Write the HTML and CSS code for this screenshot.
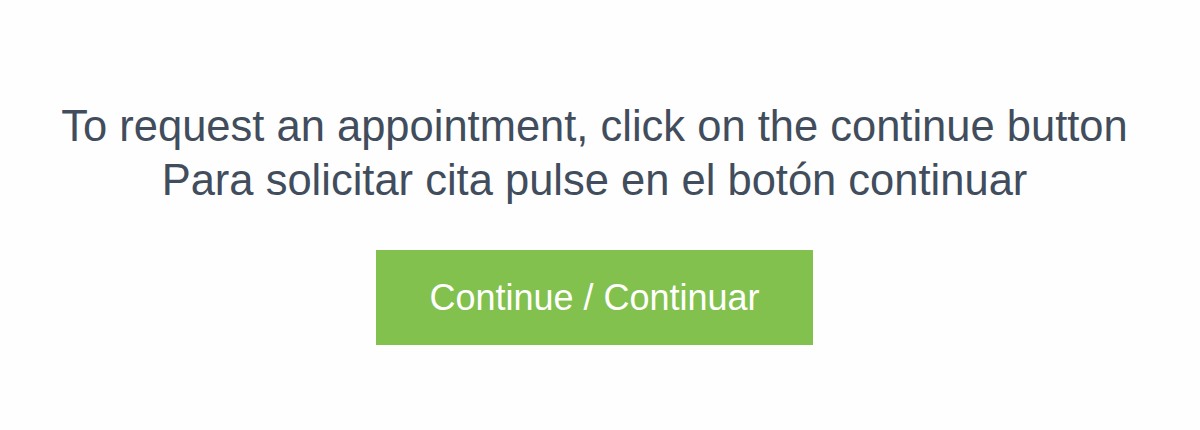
FILE: index.html
```html
<!DOCTYPE html>
<html lang="en">
<head>
<meta charset="utf-8">
<title>Appointment</title>
<link rel="stylesheet" href="styles.css">
</head>
<body>
<main class="page">
  <p class="message">To request an appointment, click on the continue button<br>Para solicitar cita pulse en el botón continuar</p>
  <a class="btn-continue" href="#">Continue / Continuar</a>
</main>
</body>
</html>
```

FILE: styles.css
```css
html, body {
  margin: 0;
  padding: 0;
  background: #fefefe;
}
body {
  font-family: "Liberation Sans", Arial, sans-serif;
  color: #414d5c;
}
.page {
  display: flex;
  flex-direction: column;
  align-items: center;
  padding: 99px 11px 0 0;
}
.message {
  margin: 0;
  font-size: 43.5px;
  line-height: 54px;
  text-align: center;
}
.btn-continue {
  margin-top: 43px;
  display: flex;
  align-items: center;
  justify-content: center;
  width: 437px;
  height: 95px;
  background: #83c14e;
  color: #ffffff;
  font-size: 36px;
  text-decoration: none;
}
```
